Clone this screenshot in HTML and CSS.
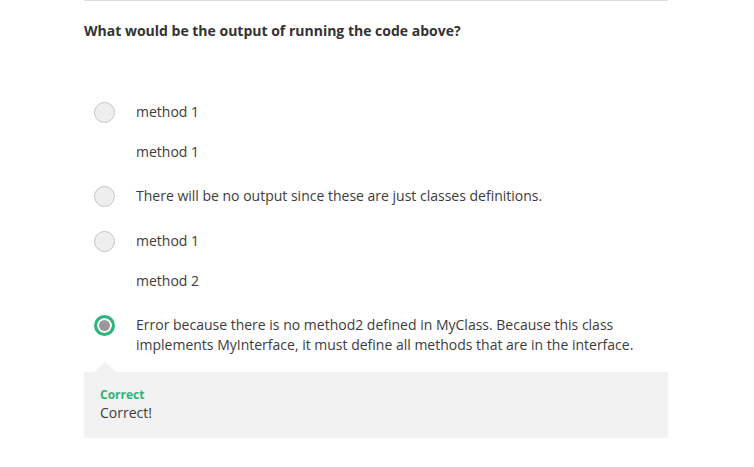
FILE: index.html
```html
<!DOCTYPE html>
<html lang="en">
<head>
<meta charset="utf-8">
<title>Quiz</title>
<link rel="stylesheet" href="styles.css">
</head>
<body>
<div class="quiz">
  <h2 class="question">What would be the output of running the code above?</h2>
  <div class="options">
    <div class="option">
      <span class="radio"></span>
      <div class="text"><p>method 1</p><p>method 1</p></div>
    </div>
    <div class="option">
      <span class="radio"></span>
      <div class="text"><p>There will be no output since these are just classes definitions.</p></div>
    </div>
    <div class="option">
      <span class="radio"></span>
      <div class="text"><p>method 1</p><p>method 2</p></div>
    </div>
    <div class="option">
      <span class="radio selected"></span>
      <div class="text"><p>Error because there is no method2 defined in MyClass. Because this class implements MyInterface, it must define all methods that are in the interface.</p></div>
    </div>
  </div>
  <div class="feedback">
    <div class="label">Correct</div>
    <div class="message">Correct!</div>
  </div>
</div>
</body>
</html>
```
FILE: styles.css
```css
html, body {
  margin: 0;
  padding: 0;
  background: #fff;
}
body {
  font-family: "Open Sans", "Noto Sans", sans-serif;
  color: #3c3c3c;
}
.quiz {
  width: 584px;
  margin-left: 84px;
  border-top: 1px solid #dcdcdc;
}
.question {
  margin: 20px 0 0;
  font-size: 14px;
  line-height: 20px;
  font-weight: 700;
  color: #333;
}
.options {
  margin-top: 61px;
  display: flex;
  flex-direction: column;
  gap: 24px;
}
.option {
  display: flex;
  align-items: flex-start;
}
.radio {
  flex: none;
  box-sizing: border-box;
  width: 21px;
  height: 21px;
  margin: 0 21px 0 10px;
  border-radius: 50%;
  border: 1px solid #c4c4c4;
  background: #eeeeee;
}
.radio.selected {
  border: 3px solid #2cb67c;
  background: #999;
  box-shadow: inset 0 0 0 2px #fff;
}
.text p {
  margin: 0 0 20px;
  font-size: 14px;
  line-height: 20px;
  color: #3c3c3c;
}
.text p:last-child {
  margin-bottom: 0;
}
.feedback {
  position: relative;
  margin-top: 17px;
  background: #f2f2f2;
  padding: 15px 16px 15px;
}
.feedback::before {
  content: "";
  position: absolute;
  left: 10px;
  top: -10px;
  border-left: 11px solid transparent;
  border-right: 11px solid transparent;
  border-bottom: 10px solid #f2f2f2;
}
.label {
  font-size: 12px;
  line-height: 16px;
  font-weight: 700;
  color: #2fb37a;
}
.message {
  font-size: 14px;
  line-height: 20px;
  color: #3c3c3c;
}
```
